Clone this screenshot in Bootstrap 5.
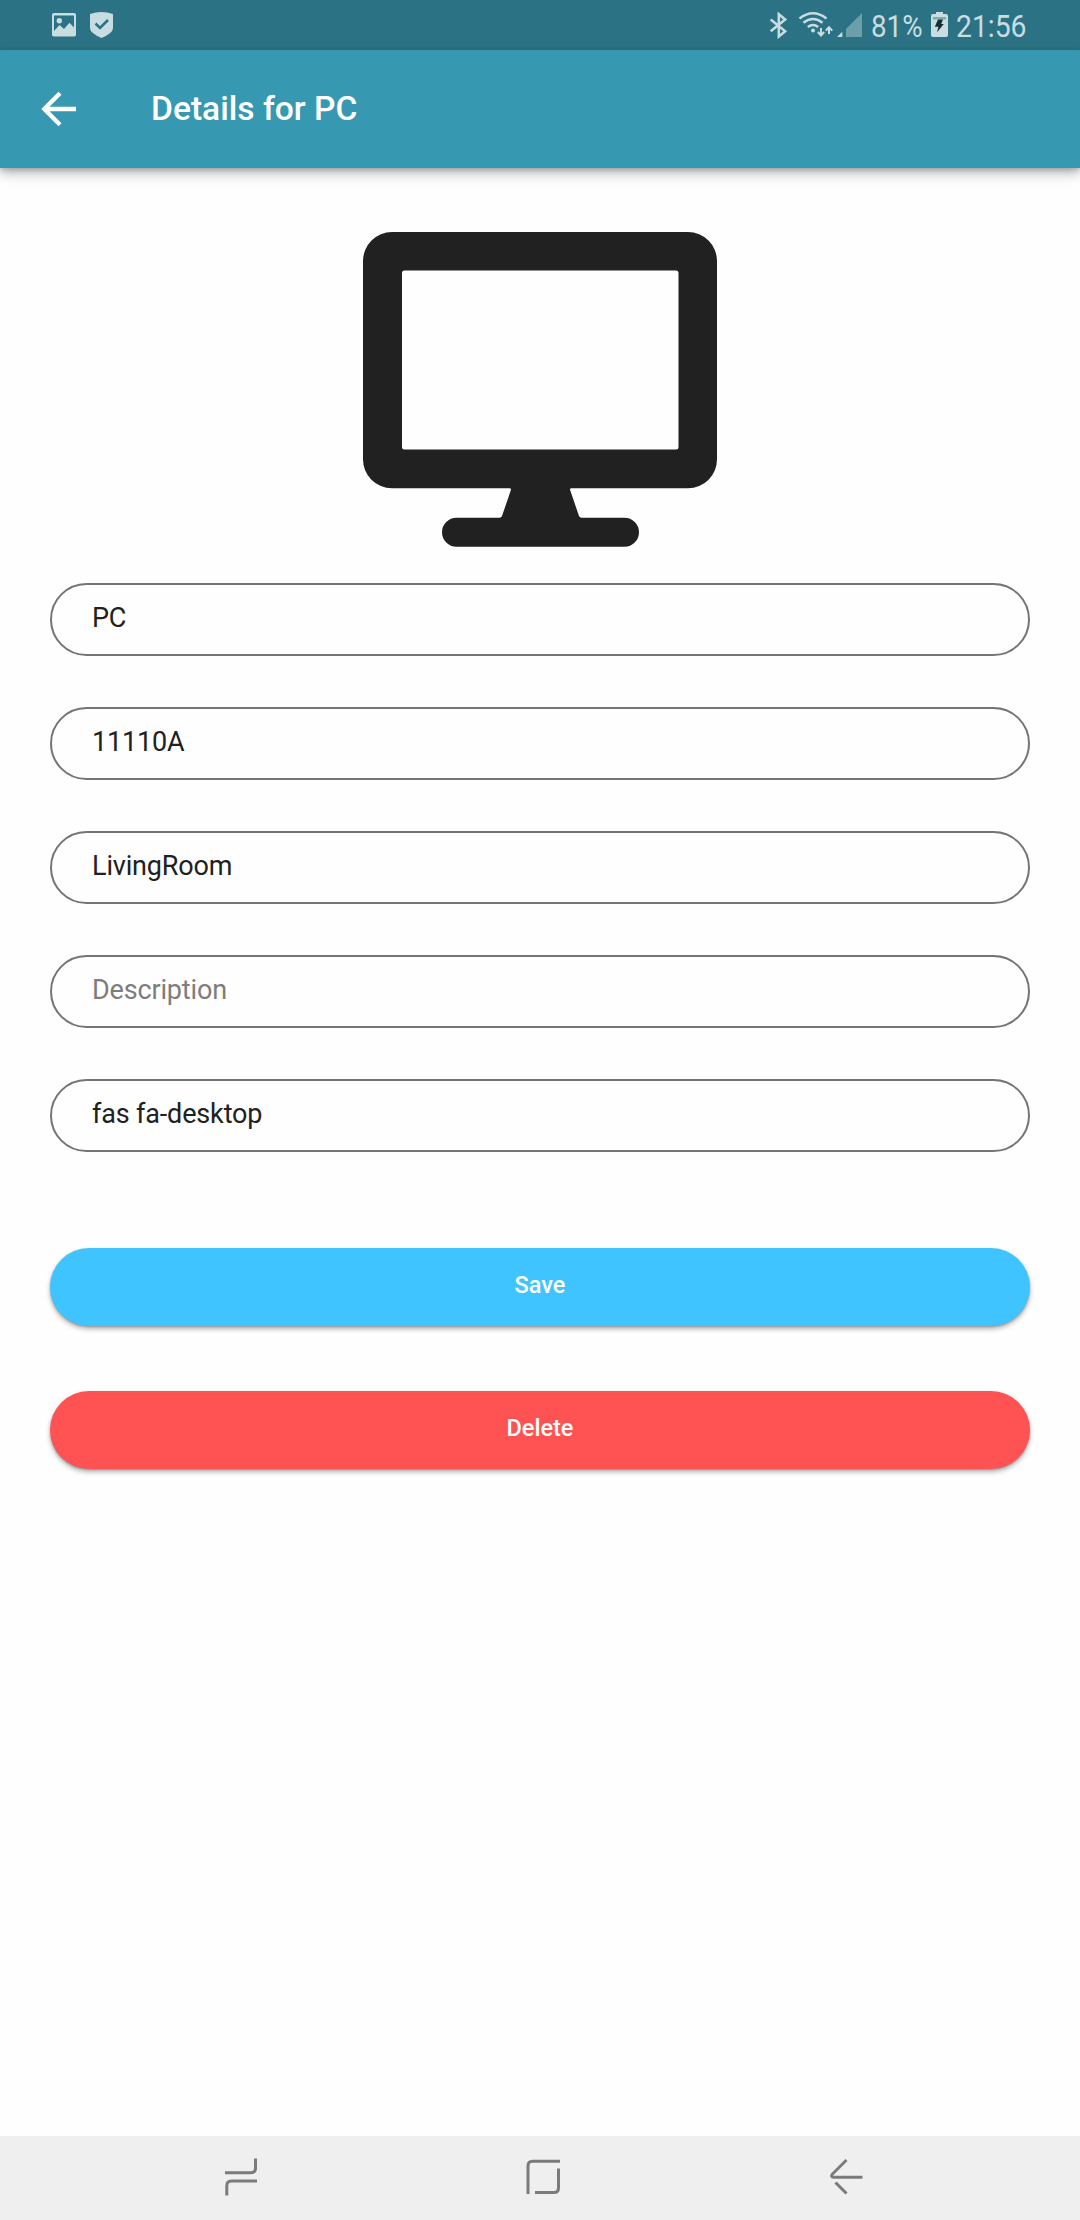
<!DOCTYPE html>
<html lang="en">
<head>
<meta charset="utf-8">
<meta name="viewport" content="width=device-width, initial-scale=1">
<title>Details for PC</title>
<link href="https://cdn.jsdelivr.net/npm/bootstrap@5.3.0/dist/css/bootstrap.min.css" rel="stylesheet">
<style>
  body { font-family: Roboto, "Liberation Sans", sans-serif; background: #fefefe; color: #212121; }
  .screen { width: 1080px; height: 2220px; overflow: hidden; }
  svg { display: block; flex: none; overflow: visible; }
  .status-bar { height: 50px; background: #2b7384; padding-left: 51px; padding-right: 52px; }
  .status-bar text { font-family: Roboto, sans-serif; font-size: 32px; fill: #c8dde2; }
  .app-bar { height: 117.5px; background: #3799b1; padding: 0 0 0 41px; box-shadow: 0 5px 12px rgba(0,0,0,.28), 0 2px 5px rgba(0,0,0,.18); z-index: 1; }
  .app-title { font-size: 33.6px; font-weight: 500; line-height: 40px; margin-left: 74px; color: #fff; }
  .device-icon { padding-top: 64px; }
  .details-form { padding: 36.5px 50px 0; }
  .field-input.form-control { height: 73.3px; border: 2px solid #757575; border-radius: 37px; background: transparent; color: #212121; font-size: 27px; letter-spacing: -.16px; line-height: 40px; padding: 0 40px 4px 40px; }
  .field-input.form-control::placeholder { color: #7d7d7d; opacity: 1; }
  .field-stack { gap: 50.7px; }
  .action-stack { padding-top: 95.7px; gap: 65px; }
  .action-btn.btn { height: 78px; border: 0; border-radius: 39px; font-size: 23.5px; font-weight: 500; line-height: 30px; padding: 0 0 3px; color: #fff; box-shadow: 0 3px 5px rgba(0,0,0,.3), 0 1px 2px rgba(0,0,0,.2); }
  .save-btn.btn { background: #40c4ff; }
  .delete-btn.btn { background: #ff5252; }
  .nav-bar { height: 84px; background: #efefef; padding: 0 205px 6px 210px; }
  .home-key { margin-right: 5px; }
</style>
</head>
<body>
<div class="screen d-flex flex-column">
  <header class="status-bar d-flex justify-content-between flex-shrink-0">
    <div class="d-flex">
      <svg width="64" height="50" viewBox="51 0 64 50">
        <path fill="#c8dde2" fill-rule="evenodd" d="M54 13h20a2 2 0 0 1 2 2v19a2 2 0 0 1-2 2.500H54a2 2 0 0 1-2-2.500V15a2 2 0 0 1 2-2zM54 15.500V31l5.500-6 4.500 4 5.500-6.200 4.500 4.700v-12z"/>
        <circle cx="59.300" cy="20.700" r="2.700" fill="#c8dde2"/>
        <path fill="#c8dde2" d="M90 14q11.500-4 23 0v14q0 5-11.500 10Q90 33 90 28z"/>
        <path fill="none" stroke="#2b7384" stroke-width="2.600" d="M95.500 23.500l4.500 4.500 8-8"/>
      </svg>
    </div>
    <div class="d-flex">
      <svg width="22" height="50" viewBox="768 0 22 50"><path fill="none" stroke="#c8dde2" stroke-width="2.500" d="M770.700 19.500l14.500 11.800-6.400 5.200V14.200l6.400 5.300-14.500 11.800"/></svg>
      <svg width="45" height="50" viewBox="790 0 45 50">
        <g fill="none" stroke="#c8dde2" stroke-width="2.400"><path d="M799.500 18.500q13.500-10.500 27 0M803.500 22.700q9.500-7.400 19 0M807.800 27q5.200-4 10.400 0"/></g>
        <circle cx="813" cy="30.500" r="2" fill="#c8dde2"/>
        <path fill="none" stroke="#c8dde2" stroke-width="2" d="M821 28v7M817.800 32l3.200 3.500 3.200-3.500M829 34v-6M825.800 30.700l3.200-3.500 3.200 3.500"/>
      </svg>
      <svg width="32" height="50" viewBox="835 0 32 50"><path fill="#c8dde2" d="M837 37h5.300v-5.300z"/><path fill="#6d9fab" d="M846 37h16V13l-16 16z"/></svg>
      <svg width="60" height="50" viewBox="867 0 60 50"><text x="871" y="37" textLength="51.500" lengthAdjust="spacingAndGlyphs">81%</text></svg>
      <svg width="25" height="50" viewBox="927 0 25 50">
        <path fill="#c8dde2" d="M936 12h7v2h3q2 0 2 2v19q0 2-2 2h-13q-2 0-2-2V16q0-2 2-2h3z"/><path fill="#7fa9b3" d="M933 17h13v2.500h-13z"/>
        <path fill="#172e34" d="M938 19.500h5l-1.800 4.500h2.600l-6.700 8.300 1.300-5.600h-3.600z"/>
      </svg>
      <svg width="76" height="50" viewBox="952 0 76 50"><text x="956" y="37" textLength="70.500" lengthAdjust="spacingAndGlyphs">21:56</text></svg>
    </div>
  </header>
  <nav class="app-bar navbar flex-nowrap justify-content-start flex-shrink-0">
    <svg width="36" height="36" viewBox="0 0 36 36"><path fill="none" stroke="#fff" stroke-width="4.300" d="M35 18H4M19 2.300L3.300 18 19 33.700"/></svg>
    <h1 class="app-title mb-0">Details for PC</h1>
  </nav>
  <main class="flex-grow-1">
    <div class="device-icon d-flex justify-content-center">
      <svg width="354" height="315" viewBox="0 0 354 315"><path fill="#212121" fill-rule="evenodd" d="M29 0H325A29 29 0 0 1 354 29V227A29 29 0 0 1 325 256.300H208.500Q206.500 256.300 207.200 258.300L216 284Q216.700 285.800 218.500 285.800H261.500A14.500 14.500 0 0 1 261.500 314.800H93.500A14.500 14.500 0 0 1 93.500 285.800H136.500Q138.300 285.800 139 284L147.800 258.300Q148.500 256.300 146.500 256.300H29A29 29 0 0 1 0 227V29A29 29 0 0 1 29 0zM41.500 38.500Q39 38.500 39 41V215Q39 217.500 41.500 217.500H313Q315.500 217.500 315.500 215V41Q315.500 38.500 313 38.500z"/></svg>
    </div>
    <form class="details-form">
      <div class="field-stack d-flex flex-column">
        <input class="field-input form-control" type="text" value="PC" aria-label="Name">
        <input class="field-input form-control" type="text" value="11110A" aria-label="Code">
        <input class="field-input form-control" type="text" value="LivingRoom" aria-label="Room">
        <input class="field-input form-control" type="text" placeholder="Description" aria-label="Description">
        <input class="field-input form-control" type="text" value="fas fa-desktop" aria-label="Icon">
      </div>
      <div class="action-stack d-flex flex-column">
        <button class="action-btn save-btn btn w-100" type="button">Save</button>
        <button class="action-btn delete-btn btn w-100" type="button">Delete</button>
      </div>
    </form>
  </main>
  <footer class="nav-bar d-flex justify-content-between align-items-center flex-shrink-0">
    <svg width="60" height="60" viewBox="0 0 60 60"><path fill="none" stroke="#7b7b7b" stroke-width="3" d="M45.500 13.500V23q0 4.700-4.700 4.700H15M47 36H21.500q-4.700 0-4.700 4.700V50.500"/></svg>
    <svg class="home-key" width="60" height="60" viewBox="0 0 60 60"><path fill="none" stroke="#7b7b7b" stroke-width="3" d="M18 49V21q0-4.700 4.700-4.700H50M48.500 23.500V43q0 4.500-4.500 4.500H25"/></svg>
    <svg width="60" height="60" viewBox="0 0 60 60"><path fill="none" stroke="#7b7b7b" stroke-width="3" d="M31.500 15L17.200 29.300Q15.500 32.200 18.500 32.200H47.500M20.500 37.500L31.500 48.500"/></svg>
  </footer>
</div>
<script src="https://cdn.jsdelivr.net/npm/bootstrap@5.3.0/dist/js/bootstrap.bundle.min.js"></script>
</body>
</html>
